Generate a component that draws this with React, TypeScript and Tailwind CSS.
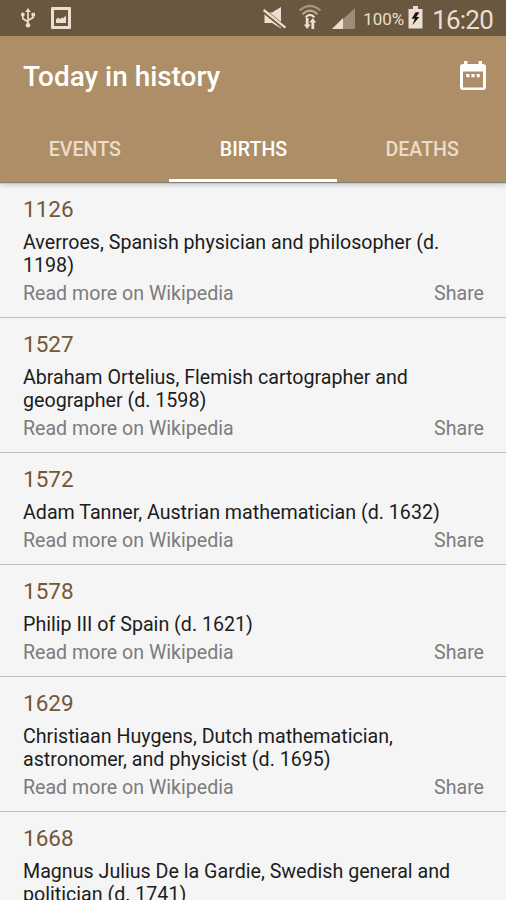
import { clsx } from "clsx";

interface HistoryEntry {
  year: string;
  lines: string[];
}

const tabs = ["EVENTS", "BIRTHS", "DEATHS"];

const births: HistoryEntry[] = [
  {
    year: "1126",
    lines: ["Averroes, Spanish physician and philosopher (d.", "1198)"],
  },
  {
    year: "1527",
    lines: ["Abraham Ortelius, Flemish cartographer and", "geographer (d. 1598)"],
  },
  { year: "1572", lines: ["Adam Tanner, Austrian mathematician (d. 1632)"] },
  { year: "1578", lines: ["Philip III of Spain (d. 1621)"] },
  {
    year: "1629",
    lines: [
      "Christiaan Huygens, Dutch mathematician,",
      "astronomer, and physicist (d. 1695)",
    ],
  },
  {
    year: "1668",
    lines: [
      "Magnus Julius De la Gardie, Swedish general and",
      "politician (d. 1741)",
    ],
  },
];

const UsbIcon = () => (
  <svg
    className="h-5 w-4"
    viewBox="0 0 16 20"
    fill="none"
    stroke="currentColor"
    strokeWidth="1.7"
  >
    <path d="M8 3v14M2.8 7v3.5L8 14M13.2 7v2.5L8 12.5" />
    <path d="M8 0 10.8 4H5.2z" fill="currentColor" stroke="none" />
    <circle cx="8" cy="17.3" r="2.3" fill="currentColor" stroke="none" />
    <circle cx="2.8" cy="6.5" r="1.9" fill="currentColor" stroke="none" />
    <path d="M11.5 4.8h3.5v3.5h-3.5z" fill="currentColor" stroke="none" />
  </svg>
);

const PictureIcon = () => (
  <svg className="h-[22px] w-5" viewBox="0 0 20 22" fill="currentColor">
    <path
      fillRule="evenodd"
      d="M1 0h18a1 1 0 0 1 1 1v20a1 1 0 0 1-1 1H1a1 1 0 0 1-1-1V1a1 1 0 0 1 1-1zM3 3v16h14V3z"
    />
    <path d="M5 16v-3.5l2-2 2 1.5 2-1.5 1.3.8L15 8.5V16z" />
  </svg>
);

const MutedIcon = () => (
  <svg className="h-[23px] w-6" viewBox="0 0 24 23" fill="currentColor">
    <path d="M1.5 5.5h7.5L18 0v21.5L9 16H1.5z" />
    <path d="M0 3.2 22 21" stroke="#6a573f" strokeWidth="4.6" />
    <path d="M.7 3 22.4 20.6" stroke="currentColor" strokeWidth="2.3" />
  </svg>
);

const WifiIcon = () => (
  <svg className="h-[25px] w-6" viewBox="0 0 24 25" fill="none">
    <g stroke="currentColor" strokeWidth="2.2">
      <path d="M1.5 6.5Q12-2.5 22.5 6.5" opacity=".45" />
      <path d="M4.5 10.2Q12 3.2 19.5 10.2" opacity=".6" />
      <path d="M7.6 13.2Q12 8.8 16.4 13.2" />
    </g>
    <path
      d="m9.2 25-3.4-4.5h2V14h2.8v6.5h2zM14.8 14l3.4 4.5h-2V25h-2.8v-6.5h-2z"
      fill="currentColor"
    />
  </svg>
);

const SignalIcon = () => (
  <svg className="h-[21px] w-[23px]" viewBox="0 0 23 21" fill="currentColor">
    <path d="M23 0v21H0z" opacity=".4" />
    <path d="M11 10v11H0z" />
  </svg>
);

const BatteryIcon = () => (
  <svg className="h-[23px] w-[15px]" viewBox="0 0 15 23" fill="currentColor">
    <path d="M5 0h5v3h4.5v19.5H.5V3H5z" />
    <path d="M7.6 6.2 3.6 12.8h3.2L4.4 19l7-8H8.3l3.1-4.8z" fill="#171411" />
  </svg>
);

const CalendarIcon = () => (
  <svg className="h-[30px] w-[26px]" viewBox="0 0 26 30" fill="currentColor">
    <path
      fillRule="evenodd"
      d="M4 0h3.4v3h11.2V0H22v3h1a3 3 0 0 1 3 3v20a3 3 0 0 1-3 3H3a3 3 0 0 1-3-3V6a3 3 0 0 1 3-3h1zM3 10.5V26.5h20V10.5z"
    />
    <path d="M6.2 13h3.2v3.2H6.2zM11.4 13h3.2v3.2h-3.2zM16.6 13h3.2v3.2h-3.2z" />
  </svg>
);

const StatusBar = () => (
  <div className="flex h-9 items-start justify-between bg-[#6a573f] text-[#eadfd0]">
    <div className="flex items-start gap-[15px] pt-[7px] pl-5">
      <div className="pt-px">
        <UsbIcon />
      </div>
      <PictureIcon />
    </div>
    <div className="flex items-start pt-1.5 pr-[13px]">
      <div className="pt-px">
        <MutedIcon />
      </div>
      <div className="-mt-0.5 ml-[11px]">
        <WifiIcon />
      </div>
      <div className="ml-[10px] pt-[2px]">
        <SignalIcon />
      </div>
      <span className="ml-2 pt-[3px] text-[17px] leading-5">100%</span>
      <div className="ml-1">
        <BatteryIcon />
      </div>
      <span className="ml-[9px] pt-px text-[26px] leading-[27px] tracking-[-0.8px]">
        16:20
      </span>
    </div>
  </div>
);

const TabBar = () => (
  <div className="grid h-[67px] grid-cols-3 text-[19.6px] font-medium">
    {tabs.map((tab) => (
      <button
        key={tab}
        className={clsx(
          "border-b-[3px] pt-1.5 pl-px",
          tab === "BIRTHS"
            ? "border-white text-white"
            : "border-transparent text-[#ebdccb]",
        )}
      >
        {tab}
      </button>
    ))}
  </div>
);

const EntryRow = ({ entry }: { entry: HistoryEntry }) => (
  <li className="border-b border-[#bfbfbf] pt-[13px] pr-[22px] pb-3 pl-[23px]">
    <h2 className="text-[22.5px] leading-[26px] text-[#745737]">
      {entry.year}
    </h2>
    <p className="mt-[9px] text-[19.65px] leading-[23px] whitespace-nowrap text-[#1c1c1c]">
      {entry.lines.map((line) => (
        <span key={line} className="block">
          {line}
        </span>
      ))}
    </p>
    <div className="mt-[5px] flex justify-between text-[19.6px] leading-[23px] text-[#7c7c7c]">
      <span>Read more on Wikipedia</span>
      <span>Share</span>
    </div>
  </li>
);

const App = () => {
  return (
    <div className="h-[900px] w-[506px] overflow-hidden bg-[#f5f5f5] font-['Roboto',sans-serif]">
      <header className="relative bg-[#ae8e66] shadow-[0_1px_1px_#858079,0_3px_5px_rgba(0,0,0,0.18)]">
        <StatusBar />
        <div className="flex h-[79px] items-center justify-between pr-5 pl-[23px] text-white">
          <h1 className="pt-0.5 text-[27.9px] leading-8 font-medium">
            Today in history
          </h1>
          <CalendarIcon />
        </div>
        <TabBar />
      </header>
      <ul className="pt-px">
        {births.map((entry) => (
          <EntryRow key={entry.year} entry={entry} />
        ))}
      </ul>
    </div>
  );
};

export default App;
